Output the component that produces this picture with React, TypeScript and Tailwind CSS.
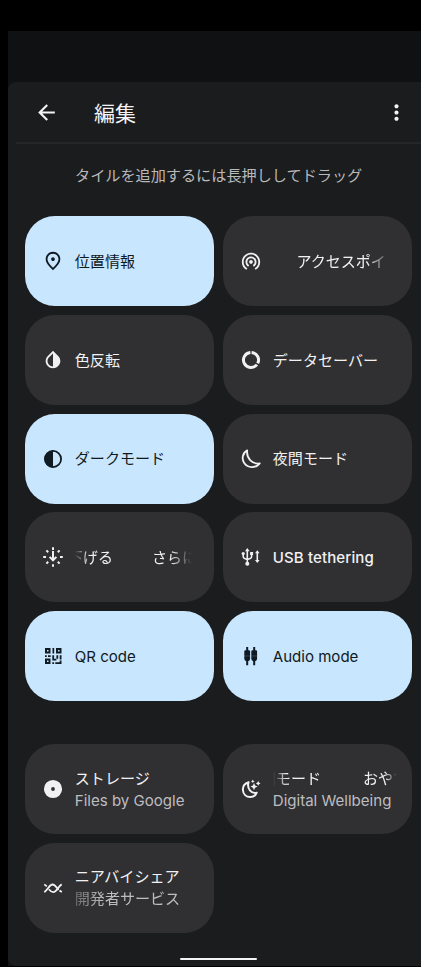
import React from "react";
import {
  MdInvertColors,
  MdMoreVert,
  MdOutlinePlace,
  MdWifiTethering,
  MdArrowBack,
} from "react-icons/md";

const DataSaverIcon = () => (
  <svg
    viewBox="0 0 22 22"
    className="h-[22px] w-[22px]"
    fill="none"
    stroke="currentColor"
    strokeWidth="3"
  >
    <path d="M11.6 3.5A7.5 7.5 0 0 1 17.7 14.4" />
    <path d="M16.9 15.6A7.5 7.5 0 1 1 10.4 3.5" />
  </svg>
);

const DarkModeIcon = () => (
  <svg viewBox="0 0 22 22" className="h-[22px] w-[22px]" fill="none">
    <circle cx="11" cy="11" r="8.1" stroke="currentColor" strokeWidth="1.8" />
    <path d="M11 2.5a8.5 8.5 0 0 0 0 17z" fill="currentColor" />
  </svg>
);

const NightIcon = () => (
  <svg
    viewBox="0 0 22 22"
    className="h-[22px] w-[22px]"
    fill="none"
    stroke="currentColor"
    strokeWidth="1.8"
    strokeLinejoin="round"
  >
    <path d="M7.2 2.4C2.6 4.8 1.4 10.9 4.2 15c3.6 5.2 11.5 5.5 15.6.4C12.4 16.6 6.2 10.5 7.2 2.4z" />
  </svg>
);

const ExtraDimIcon = () => (
  <svg
    viewBox="0 0 22 22"
    className="h-[22px] w-[22px]"
    fill="none"
    stroke="currentColor"
    strokeWidth="2"
  >
    <path d="M11 5v9.2M7.6 10.9l3.4 3.4 3.4-3.4" />
    <path d="M11 1.3v2.6M11 18.2v2.6M1.2 11h2.8M18 11h2.8M4.4 4.4l1.8 1.8M17.6 4.4l-1.8 1.8M4.4 17.6l1.8-1.8M17.6 17.6l-1.8-1.8" />
  </svg>
);

const UsbIcon = () => (
  <svg viewBox="0 0 22 22" className="h-[22px] w-[22px]" fill="none">
    <path
      d="M7.3 4v13M3.2 8v2.6q0 1.6 1.4 1.9l2.7.9M11.6 8v2.6q0 1.6-1.4 1.9l-2.9.9M17.3 6v9"
      stroke="currentColor"
      strokeWidth="1.6"
    />
    <path
      d="M7.3 2l2.3 3.2H5zM10.1 6h3v3h-3zM17.3 4.2l2.3 3H15zM17.3 16.9l2.3-3H15z"
      fill="currentColor"
    />
    <circle cx="3.2" cy="7.5" r="1.6" fill="currentColor" />
    <circle cx="7.3" cy="17.8" r="2" fill="currentColor" />
  </svg>
);

const QrIcon = () => (
  <svg viewBox="0 0 22 22" className="h-[22px] w-[22px]" fill="none">
    <path
      d="M4 4h3.5v3.5H4zM15 4h3.5v3.5H15zM4 14.5h3.5V18H4z"
      stroke="currentColor"
      strokeWidth="2"
    />
    <path
      d="M10.5 3h1.7v5.5h-1.7zM3 10.2h1.8V12H3zM6 10.2h2.7V12H6zM10.3 10.2h1.8v3.5h2.3v-3.5h1.8v3.5h-1.8v1.8h-4.1zM17.7 10.2h1.8v4.2h-1.8zM10.3 17.2h1.8V19h-1.8zM13.3 17.2h4.4v-1.8h1.8V19h-6.2z"
      fill="currentColor"
    />
  </svg>
);

const AudioIcon = () => (
  <svg viewBox="0 0 22 22" className="h-[22px] w-[22px]" fill="currentColor">
    <path d="M6.2 2h2v3.3H9.5l.6 1v7.4q0 1.8-1.9 2.5v4.1h-2v-4.1q-1.9-.7-1.9-2.5V6.3l.6-1h1.3z" />
    <path d="M13.2 2h2v3.3h1.3l.6 1v7.4q0 1.8-1.9 2.5v4.1h-2v-4.1q-1.9-.7-1.9-2.5V6.3l.6-1h1.3z" />
    <path d="M4.3 11h5.8M11.3 11h5.8" stroke="#c9e6ff" strokeOpacity=".2" />
  </svg>
);

const StorageIcon = () => (
  <svg viewBox="0 0 22 22" className="h-[22px] w-[22px]" fill="none">
    <circle cx="11" cy="11" r="5.5" stroke="currentColor" strokeWidth="7.2" />
  </svg>
);

const BedtimeIcon = () => (
  <svg viewBox="0 0 22 22" className="h-[22px] w-[22px]" fill="currentColor">
    <path
      d="M8.6 4.2C4.8 5.2 2.7 8.3 2.9 12c.3 4 3.3 7 7.3 7.1 3 0 5.5-1.7 6.500-4.400C11.500 16 6.500 10.500 8.600 4.200z"
      fill="none"
      stroke="currentColor"
      strokeWidth="2"
      strokeLinejoin="round"
    />
    <path d="M14 5l1.1 2.5 2.5 1.1-2.5 1.1L14 12.2l-1.1-2.5-2.5-1.1 2.5-1.1z" />
    <path d="M18.2 3.1l.8 1.5 1.5.8-1.5.8-.8 1.5-.8-1.5-1.5-.8 1.5-.8zM12.8 1.4l.6 1.3 1.3.6-1.3.6-.6 1.3-.6-1.3-1.3-.6 1.3-.6z" />
  </svg>
);

const NearbyIcon = () => (
  <svg
    viewBox="0 0 22 22"
    className="h-[22px] w-[22px]"
    fill="none"
    stroke="currentColor"
    strokeWidth="1.8"
  >
    <path d="M2.3 15.1C5.6 13.4 7.2 7.5 10.6 7.5c2.4 0 3.9 3 5.9 5.3M17.5 13.5l2.3 1.6" />
    <path d="M2.3 7.4l2.500 2M6.800 12.200c1.400 1.700 2.900 2.900 4.600 2.900 3.200 0 4.900-5.800 8.300-7.700" />
  </svg>
);

type TileProps = {
  icon: React.ReactNode;
  label: React.ReactNode;
  sub?: React.ReactNode;
  active?: boolean;
};

const Tile = ({ icon, label, sub, active }: TileProps) => {
  return (
    <div
      className={`flex h-[90px] items-center overflow-hidden rounded-[30px] pl-[17px] ${
        active ? "bg-[#c9e6ff] text-[#101a22]" : "bg-[#303032] text-[#f1f1f3]"
      }`}
    >
      <div className="flex w-[22px] shrink-0 text-[22px]">{icon}</div>
      <div className="ml-[10.8px] min-w-0 pt-[1.4px] text-[15.05px] leading-[22px] whitespace-nowrap">
        <div>{label}</div>
        {sub && <div className="text-[#bdbdc0]">{sub}</div>}
      </div>
    </div>
  );
};

const Marquee = ({ children }: { children: React.ReactNode }) => (
  <div className="flex w-[117px] overflow-hidden [mask-image:linear-gradient(to_right,transparent,black_14px,black_95px,transparent)]">
    {children}
  </div>
);

export default function App() {
  return (
    <div
      lang="ja"
      className="h-[967px] w-[421px] overflow-hidden bg-black pt-[31px] pl-2 font-['Inter','Noto_Sans_CJK_JP',sans-serif]"
    >
      <div className="h-[935px] bg-[#101112] pt-[51px]">
        <div className="flex h-[884px] flex-col rounded-l-lg bg-[#1b1c1e]">
          <header className="ml-2 flex h-[62px] shrink-0 items-center border-b-2 border-[#252628] pl-5 text-[#f4f4f6]">
            <MdArrowBack className="h-[25px] w-[25px] -translate-x-0.5" />
            <h1 className="ml-[33px] pt-[3px] text-[21px] leading-8">編集</h1>
            <MdMoreVert className="mt-px mr-3 ml-auto h-[25px] w-[25px]" />
          </header>

          <p className="mt-5 pl-[67px] text-[15.15px] leading-6 text-[#b9b9bb]">
            タイルを追加するには長押ししてドラッグ
          </p>

          <div className="mt-[28.3px] ml-[17px] grid w-[387px] grid-cols-2 gap-x-[9px] gap-y-[8.7px]">
            <Tile active icon={<MdOutlinePlace />} label="位置情報" />
            <Tile
              icon={<MdWifiTethering />}
              label={
                <Marquee>
                  <span className="ml-[23.6px]">アクセスポイント</span>
                </Marquee>
              }
            />
            <Tile icon={<MdInvertColors />} label="色反転" />
            <Tile icon={<DataSaverIcon />} label="データセーバー" />
            <Tile active icon={<DarkModeIcon />} label="ダークモード" />
            <Tile icon={<NightIcon />} label="夜間モード" />
            <Tile
              icon={<ExtraDimIcon />}
              label={
                <Marquee>
                  <span className="-ml-[7px]">下げる</span>
                  <span className="ml-[39px]">さらに</span>
                </Marquee>
              }
            />
            <Tile
              icon={<UsbIcon />}
              label={<span className="font-medium tracking-[0.1px]">USB tethering</span>}
            />
            <Tile active icon={<QrIcon />} label="QR code" />
            <Tile active icon={<AudioIcon />} label="Audio mode" />
          </div>

          <div className="mt-[43px] ml-[17px] grid w-[387px] grid-cols-2 gap-x-[9px] gap-y-[8.7px]">
            <Tile icon={<StorageIcon />} label="ストレージ" sub="Files by Google" />
            <Tile
              icon={<BedtimeIcon />}
              label={
                <div className="flex w-[124px] overflow-hidden [mask-image:linear-gradient(to_right,transparent,black_14px,black_112px,transparent)]">
                  <span className="-ml-[12px]">間モード</span>
                  <span className="ml-[42px]">おやす</span>
                </div>
              }
              sub="Digital Wellbeing"
            />
            <Tile
              icon={<NearbyIcon />}
              label="ニアバイシェア"
              sub={
                <span className="[mask-image:linear-gradient(to_right,rgb(0_0_0/0.4),black_28px)]">
                  開発者サービス
                </span>
              }
            />
          </div>

          {/* gesture bar */}
          <div className="mt-auto mb-[6px] ml-[172px] h-[2.5px] w-[77px] rounded-full bg-[#f4f4f6]" />
        </div>
      </div>
    </div>
  );
}
